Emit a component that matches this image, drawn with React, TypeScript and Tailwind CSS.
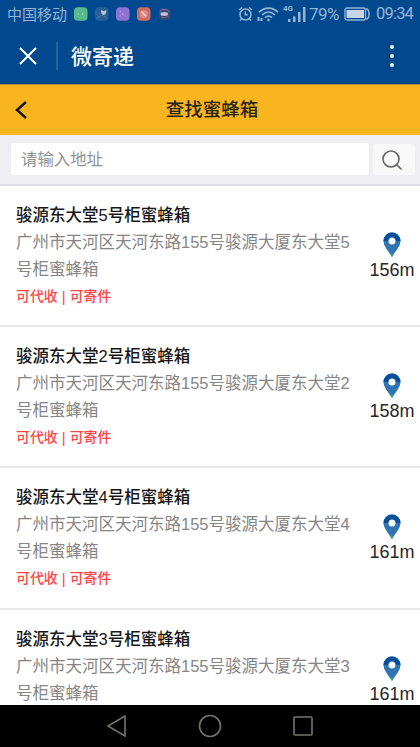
import { Search } from "lucide-react"

const boxes = [
  { id: 5, distance: "156m", tags: true },
  { id: 2, distance: "158m", tags: true },
  { id: 4, distance: "161m", tags: true },
  { id: 3, distance: "161m", tags: false },
]

const StatusBar = () => {
  return <div className="flex h-7 shrink-0 items-center pl-[7px] pr-[6px] text-[#94b5d8]">
    <span className="w-[67px] text-[15px] leading-7 pt-0.5">中国移动</span>
    <div className="flex gap-[7.5px]">
      <svg width="13.5" height="14" viewBox="0 0 14 14">
        <rect width="14" height="14" rx="4" fill="#58b98b" />
        <path d="M4.5 6v2M9 6v2" stroke="#a4dcc0" />
      </svg>
      <svg width="13.5" height="14" viewBox="0 0 14 14">
        <rect width="14" height="14" rx="4" fill="#255e98" />
        <path d="M6 3l3 1 3-1-1 4-2 1-2-1z" fill="#c4c4cb" />
        <path d="M2 11l5-3 5 3" stroke="#5179a2" fill="none" />
      </svg>
      <svg width="13.5" height="14" viewBox="0 0 14 14">
        <rect width="14" height="14" rx="4" fill="#8c72d2" />
        <path d="M4 4.5h1M6 7h2M9 9h1M4 9h1" stroke="#c3afe9" />
      </svg>
      <svg width="13.5" height="14" viewBox="0 0 14 14">
        <rect width="14" height="14" rx="4" fill="#cf6c67" />
        <circle cx="7" cy="7" r="4" fill="#d98e88" />
        <path d="M4.5 4.5l5 5" stroke="#f1d3d0" strokeWidth="1.5" />
      </svg>
      <svg width="13.5" height="14" viewBox="0 0 14 14">
        <rect x="1" y="1" width="12" height="12" rx="2" fill="#314a77" />
        <path d="M2 4l3-2 5 1 2 2" stroke="#8d6fc0" fill="none" />
        <ellipse cx="6.5" cy="7" rx="4" ry="2" fill="#c6bcd4" />
        <path d="M3 10l4 1 4-2" stroke="#896458" fill="none" />
      </svg>
    </div>

    <div className="ml-auto flex items-center font-[Roboto,sans-serif]">
      <svg width="15" height="16" viewBox="0 0 15 16" fill="none" stroke="currentColor" strokeWidth="1.5">
        <circle cx="7.5" cy="8.5" r="5.5" />
        <path d="M7.3 5.5v3.3h2.5M1 4l3-2.5M14 4l-3-2.5M3.5 12.7L2 14.5M11.5 12.7l1.5 1.8" />
      </svg>
      <svg className="ml-1" width="23" height="16" viewBox="0 0 23 16" fill="none" stroke="currentColor" strokeWidth="1.7">
        <path d="M2 6.2c5.8-5.4 13.2-5.4 19 0M5 9c4-3.8 9-3.8 13 0M8 11.7c2-2.1 5-2.1 7 0" />
        <circle cx="11.5" cy="14" r="1.3" fill="currentColor" stroke="none" />
        <path d="M1.5 11v4M4.5 12v3" strokeWidth="2" />
      </svg>
      <div className="relative ml-[3px] h-4 w-[23px]">
        <span className="absolute -top-[2px] left-0 text-[8px] leading-[9px] font-bold">4G</span>
        <svg width="23" height="16" viewBox="0 0 23 16" fill="currentColor">
          <path d="M5 13h2.5v3H5zM10 10.5h2.5V16H10zM15 6h2.5v10H15zM20 1h2.5v15H20z" />
        </svg>
      </div>
      <span className="ml-[3px] w-[31px] text-[17px] leading-7 tracking-[-0.5px]">79%</span>
      <svg className="ml-1" width="27" height="14" viewBox="0 0 27 14">
        <rect x="1" y="1" width="20.5" height="12" rx="2" fill="none" stroke="currentColor" strokeWidth="1.3" />
        <rect x="2.5" y="3" width="17.5" height="8" fill="#c5d5e6" />
        <path d="M22 2c4 0 4 10 0 10" fill="none" stroke="currentColor" strokeWidth="1.5" />
      </svg>
      <span className="ml-[5px] w-[38px] text-[16.5px] leading-7 tracking-[-0.8px]">09:34</span>
    </div>
  </div>
}

const Pin = () => {
  return <svg width="18" height="26" viewBox="0 0 18 26">
    <path d="M9 .5A8.5 8.5 0 0 0 .5 9C.5 14 5 18.5 9 25c4-6.5 8.500-11 8.500-16A8.500 8.500 0 0 0 9 .5z" fill="#2f75b3" />
    <path d="M.5 9a8.500 8.500 0 0 1 17 0z" fill="#074f98" />
    <path d="M7.300 22.300L9 25l1.700-2.700L9 21z" fill="#35a18a" />
    <circle cx="9" cy="9" r="3.500" fill="#fff" />
  </svg>
}

type Box = { id: number; distance: string; tags: boolean }

const BoxItem = ({ id, distance, tags }: Box) => {
  return <div className="flex h-[141.200px] shrink-0 border-b-2 border-[#e8e8e8] pl-4">
    <div className="w-[348px] shrink-0 pt-4 text-[16.500px] leading-[27px] whitespace-nowrap">
      <div className="font-medium text-[#171717]">骏源东大堂{id}号柜蜜蜂箱</div>
      <div className="text-[#858585]">
        广州市天河区天河东路155号骏源大厦东大堂{id}<br />号柜蜜蜂箱
      </div>
      {tags && <div className="flex items-center text-[13.900px] font-medium text-[#ff4545]">
        可代收<span className="w-3 text-center text-[15px] font-normal">|</span>可寄件
      </div>}
    </div>
    <div className="flex w-14 flex-col items-center pt-[46px]">
      <Pin />
      <div className="text-[18px] leading-[25px] text-[#262626]">{distance}</div>
    </div>
  </div>
}

export default function App() {
  return <div className="flex h-[747px] w-[420px] flex-col overflow-hidden bg-white font-['Liberation_Sans','Noto_Sans_CJK_SC',sans-serif]">
    <div className="flex h-[84px] shrink-0 flex-col bg-[#00498f]">
      <StatusBar />
      <div className="flex flex-1 items-center text-white">
        <svg className="ml-[19px]" width="18" height="18" viewBox="0 0 18 18" stroke="currentColor" strokeWidth="2">
          <path d="M1 1l16 16M17 1L1 17" />
        </svg>
        <div className="ml-[19px] h-7 w-0.5 bg-[#23629e]" />
        <div className="ml-[13px] pt-0.5 text-[21px] leading-8 font-medium">微寄递</div>
        <svg className="mr-[26px] ml-auto" width="4" height="24" viewBox="0 0 4 24" fill="currentColor">
          <circle cx="2" cy="3" r="2" />
          <circle cx="2" cy="12" r="2" />
          <circle cx="2" cy="21" r="2" />
        </svg>
      </div>
    </div>

    <div className="grid h-[51px] shrink-0 grid-cols-[60px_1fr_60px] items-center border-t border-[#ad8a35] bg-[#f9b51e] text-[#282317]">
      <svg className="ml-[15px]" width="12" height="18" viewBox="0 0 12 18" fill="none" stroke="#171510" strokeWidth="2.500">
        <path d="M11 1L2 9l9 8" />
      </svg>
      <div className="pl-1 text-center text-[18.500px] leading-7 font-medium">查找蜜蜂箱</div>
    </div>

    <div className="flex h-[51px] shrink-0 gap-1 border-b-2 border-[#dedfe2] bg-[#eeeef3] pt-2 pl-[11px]">
      <div className="h-8 w-[358px] rounded-[3px] bg-white pl-2.5 text-[16.400px] leading-8 text-[#929292]">请输入地址</div>
      <div className="flex h-[31px] w-[42px] items-center rounded-[3px] bg-[#f8f8f8] pl-[7px] mt-px">
        <Search size={24} strokeWidth={1.600} color="#656565" />
      </div>
    </div>

    <div className="flex min-h-0 flex-1 flex-col overflow-hidden">
      {boxes.map((box) => <BoxItem key={box.id} {...box} />)}
    </div>

    <div className="flex h-[42px] shrink-0 items-center bg-black">
      <svg className="ml-[106px]" width="21" height="22" viewBox="0 0 21 22" fill="none" stroke="#77736b" strokeWidth="1.600">
        <path d="M19 1v20L2 11z" />
      </svg>
      <svg className="ml-[71px]" width="24" height="24" viewBox="0 0 24 24" fill="none" stroke="#77736b" strokeWidth="1.600">
        <circle cx="12" cy="12" r="10.500" />
      </svg>
      <svg className="ml-[71px]" width="20" height="20" viewBox="0 0 20 20" fill="none" stroke="#77736b" strokeWidth="1.600">
        <rect x="1" y="1" width="18" height="18" rx="1" />
      </svg>
    </div>
  </div>
}
